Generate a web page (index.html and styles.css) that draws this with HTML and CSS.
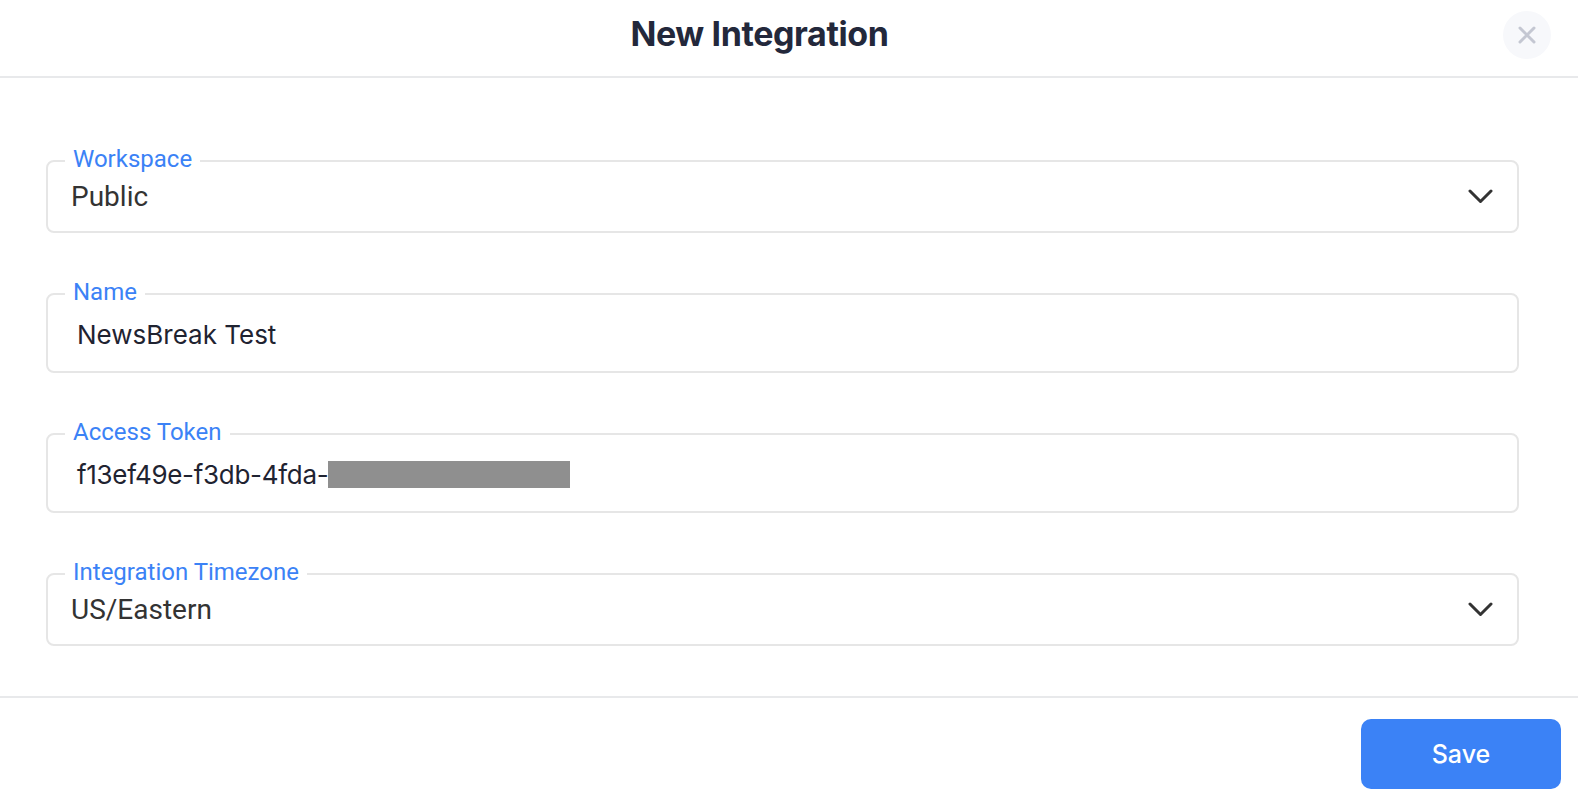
FILE: index.html
```html
<!DOCTYPE html>
<html lang="en">
<head>
    <meta charset="UTF-8">
    <meta name="viewport" content="width=device-width, initial-scale=1.0">
    <title>New Integration</title>
    <link rel="stylesheet" href="styles.css">
</head>
<body>
    <div class="modal">
        <div class="modal-header">
            <h1>New Integration</h1>
            <button class="close-btn" aria-label="Close">
                <svg width="20" height="20" viewBox="0 0 20 20">
                    <path d="M3 3 L17 17 M17 3 L3 17" stroke="#c4c7d2" stroke-width="3" stroke-linecap="round" fill="none"/>
                </svg>
            </button>
        </div>

        <div class="modal-body">
            <!-- Workspace picker -->
            <div class="field field-select">
                <span class="field-label">Workspace</span>
                <span class="select-value">Public</span>
                <svg class="chevron" width="25" height="15" viewBox="0 0 25 15">
                    <path d="M2 2 L12.5 12.5 L23 2" stroke="#333" stroke-width="3" stroke-linecap="round" stroke-linejoin="round" fill="none"/>
                </svg>
            </div>

            <div class="field field-text">
                <span class="field-label">Name</span>
                <span class="input-value">NewsBreak Test</span>
            </div>

            <div class="field field-text">
                <span class="field-label">Access Token</span>
                <span class="input-value token">f13ef49e-f3db-4fda-<span class="redacted"></span></span>
            </div>

            <!-- Timezone picker -->
            <div class="field field-select">
                <span class="field-label">Integration Timezone</span>
                <span class="select-value">US/Eastern</span>
                <svg class="chevron" width="25" height="15" viewBox="0 0 25 15">
                    <path d="M2 2 L12.5 12.5 L23 2" stroke="#333" stroke-width="3" stroke-linecap="round" stroke-linejoin="round" fill="none"/>
                </svg>
            </div>
        </div>

        <div class="modal-footer">
            <button class="save-btn">Save</button>
        </div>
    </div>
</body>
</html>
```

FILE: styles.css
```css
body {
    margin: 0;
    background-color: #fff;
    font-family: Roboto, "Liberation Sans", sans-serif;
}

.modal {
    background-color: #fff;
}

.modal-header {
    position: relative;
    height: 76px;
    border-bottom: 2px solid #e8e9eb;
    display: flex;
    align-items: center;
    padding-right: 59px;
}

.modal-header h1 {
    flex: 1;
    margin: 0 0 10px;
    text-align: center;
    font-family: Inter, "Noto Sans", sans-serif;
    font-size: 34px;
    font-weight: 700;
    letter-spacing: -0.4px;
    color: #23283b;
}

.close-btn {
    position: absolute;
    top: 11px;
    right: 27px;
    width: 48px;
    height: 48px;
    border: none;
    border-radius: 50%;
    background-color: #f7f8fb;
    display: flex;
    align-items: center;
    justify-content: center;
    padding: 0;
    cursor: pointer;
}

.modal-body {
    display: flex;
    flex-direction: column;
    gap: 60px;
    padding: 82px 59px 50px 46px;
}

.field {
    position: relative;
    box-sizing: border-box;
    display: flex;
    align-items: center;
    border: 2px solid #e6e6e6;
    border-radius: 8px;
}

.field-select {
    height: 73px;
    padding: 0 24px 0 23px;
}

.field-text {
    height: 80px;
    padding: 0 29px;
}

.field-label {
    position: absolute;
    top: -16px;
    left: 17px;
    padding: 0 8px;
    background-color: #fff;
    font-size: 24px;
    line-height: 26px;
    color: #3b82f6;
}

.select-value {
    flex: 1;
    font-size: 28px;
    color: #333;
}

.input-value {
    display: flex;
    align-items: center;
    font-family: Inter, "Noto Sans", sans-serif;
    font-size: 26px;
    color: #1f2331;
    padding-top: 2px;
}

.token {
    letter-spacing: -0.3px;
}

.redacted {
    display: inline-block;
    width: 242px;
    height: 27px;
    background-color: #8f8f8f;
}

.modal-footer {
    border-top: 2px solid #e8e9eb;
    display: flex;
    justify-content: flex-end;
    padding: 21px 17px 17px;
}

.save-btn {
    width: 200px;
    height: 70px;
    border: none;
    border-radius: 10px;
    background-color: #3b82f6;
    color: #fff;
    font-family: Inter, "Noto Sans", sans-serif;
    font-size: 25px;
    font-weight: 500;
    cursor: pointer;
}

.save-btn:hover {
    background-color: #2f6fd8;
}
```
